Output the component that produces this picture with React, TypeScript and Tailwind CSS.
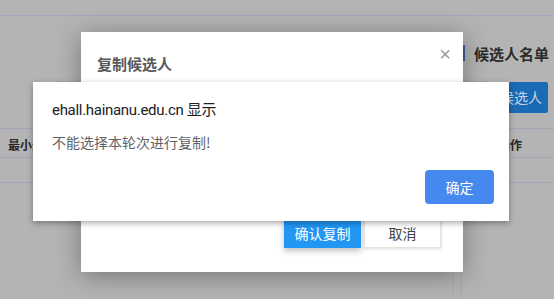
import React from "react";

const cjk = "font-['Microsoft_YaHei','Noto_Sans_CJK_SC',sans-serif]";

// 页面背景（已被遮罩压暗的颜色）
const BackgroundPage: React.FC = () => (
  <div className="flex flex-col h-full bg-[#b4b4b4]">
    <div className="h-[16px] shrink-0 border-b border-[#a6a6c4]" />
    <div className="flex h-[112px] shrink-0">
      <div className="flex-1" />
      <div className="w-[91px] pt-[29px] flex flex-col">
        <div className="flex items-center gap-[9px] h-[16px] whitespace-nowrap">
          <span className="w-[2px] h-[16px] bg-[#3d5c99] shrink-0" />
          <span className="text-[15px] font-bold text-[#2b2b2b] leading-none">候选人名单</span>
        </div>
        <div className="mt-[21px] flex justify-end pr-[6px]">
          <button className="h-[31px] px-[6px] bg-[#1a6ab4] text-[#c4d6e8] text-[14px] rounded-[2px] whitespace-nowrap">
            添加候选人
          </button>
        </div>
      </div>
    </div>
    <div className="border-t border-[#a3a3b6] flex h-[29px] items-center text-[12px] font-bold text-[#262626]">
      <div className="flex-1 pl-[8px] pt-[4px]">最小选择人数</div>
      <div className="w-[56px] pt-[4px]">操作</div>
    </div>
    <div className="border-t border-[#a3a3b6] h-[25px]" />
    <div className="border-t border-[#a3a3b6] flex-1 flex">
      <div className="flex-1" />
      <div className="w-[9px] border-l border-r border-[#a8a8b8]" />
      <div className="w-[92px]" />
    </div>
  </div>
);

const CopyDialog: React.FC = () => (
  <div className="absolute left-[81px] top-[32px] w-[382px] h-[240px] bg-white shadow-[0_4px_24px_rgba(0,0,0,0.35)] flex flex-col">
    <div className="flex items-start justify-between pl-[16px] pr-[12px] pt-[23px]">
      <h3 className="text-[15px] font-bold text-[#595959] leading-[17px]">复制候选人</h3>
      <span className="text-[#9a9a9a] text-[20px] leading-none -mt-[11px] font-['Liberation_Sans',sans-serif]">×</span>
    </div>
    <div className="flex-1" />
    <div className="flex justify-end gap-[3px] pr-[22px] pb-[24px]">
      <button className="w-[77px] h-[30px] bg-[#2196f3] text-white text-[14px] shadow-[0_3px_6px_rgba(0,0,0,0.25)]">
        确认复制
      </button>
      <button className="w-[77px] h-[30px] bg-white text-[#444] text-[14px] border border-[#e2e2e2] shadow-[0_1px_3px_rgba(0,0,0,0.15)]">
        取消
      </button>
    </div>
  </div>
);

const BrowserAlert: React.FC = () => (
  <div className="absolute left-[33px] top-[82px] w-[476px] h-[139px] bg-white shadow-[0_2px_6px_rgba(0,0,0,0.35)] flex flex-col pl-[19px] pr-[15px] pt-[20px] pb-[17px]">
    <div className="text-[15px] tracking-[-0.3px] text-[#202124] leading-[17px] font-['Roboto','Noto_Sans_CJK_SC',sans-serif]">
      ehall.hainanu.edu.cn 显示
    </div>
    <div className="mt-[15px] text-[14px] text-[#5f6368] leading-[16px]">不能选择本轮次进行复制!</div>
    <div className="flex-1" />
    <div className="flex justify-end">
      <button className="w-[69px] h-[34px] rounded-[4px] bg-[#4689ee] text-white text-[14px]">确定</button>
    </div>
  </div>
);

export default function App() {
  return (
    <div className={`relative w-[554px] h-[299px] overflow-hidden ${cjk}`}>
      <BackgroundPage />
      <CopyDialog />
      <BrowserAlert />
    </div>
  );
}
